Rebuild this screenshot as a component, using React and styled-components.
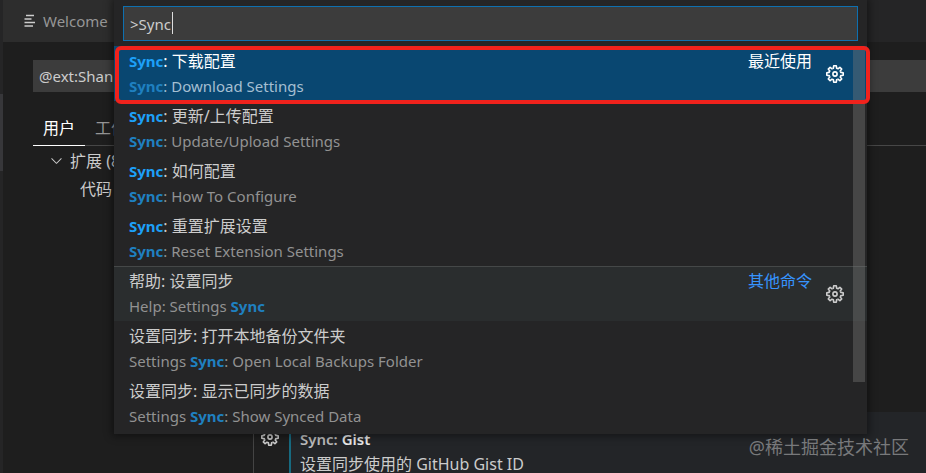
import styled, { createGlobalStyle } from 'styled-components'
import { VscChevronDown } from 'react-icons/vsc'

const colors = {
    editor: '#1e1e1e',
    widget: '#252526',
    tab: '#2d2d2d',
    field: '#3c3c3c',
    text: '#cccccc',
    muted: '#929292',
    focus: '#0e70b0',
    selected: '#094771',
    hover: '#2a2d2e',
    match: '#1da0f8',
    matchMuted: '#1f80c0',
    link: '#3794ff',
    marker: '#f0221c',
}

const GlobalStyle = createGlobalStyle`
    * {
        box-sizing: border-box;
    }
    body {
        margin: 0;
        overflow: hidden;
        background: ${colors.editor};
        color: ${colors.text};
        font-family: "Noto Sans", "Noto Sans CJK SC", sans-serif;
        font-size: 16px;
    }
    button, input {
        font: inherit;
        color: inherit;
    }
    ul {
        list-style: none;
        margin: 0;
        padding: 0;
    }
`

/**
 * Whole window: side edge and editor, with the palette over them.
 */
const Window = styled.div`
    position: relative;
    display: flex;
    height: 100vh;
    overflow: hidden;
`

const SideEdge = styled.div`
    flex: 0 0 3px;
    padding-top: 94px;
    background: ${colors.widget};
`

const SideThumb = styled.div`
    height: 77px;
    background: #37373a;
`

const Editor = styled.main`
    flex: 1;
    min-width: 0;
    display: flex;
    flex-direction: column;
`

const TabBar = styled.header`
    display: flex;
    height: 42px;
    background: ${colors.widget};
`

const Tab = styled.button`
    display: flex;
    align-items: center;
    gap: 6px;
    padding: 0 20px;
    border: 0;
    background: ${colors.tab};
    color: #969696;
    font-size: 15px;
`

const SearchInput = styled.input`
    flex: 0 0 32px;
    margin: 18px 0 0 30px;
    padding: 0 6px;
    border: 0;
    background: ${colors.field};
    font-size: 15px;
`

const Scopes = styled.nav`
    display: flex;
    height: 38px;
    margin: 16px 0 0 30px;
    border-bottom: 1px solid #474747;
`

const Scope = styled.button`
    height: 38px;
    padding: 0 10px;
    border: 0;
    border-bottom: 1px solid ${({ $active }) => ($active ? '#ffffff' : 'transparent')};
    background: none;
    color: ${({ $active }) => ($active ? '#ffffff' : '#969696')};
`

const SettingsBody = styled.div`
    flex: 1;
    display: flex;
    min-height: 0;
`

const Tree = styled.ul`
    flex: 0 0 251px;
    border-right: 1px solid #444444;
`

const TreeItem = styled.li`
    display: flex;
    align-items: center;
    gap: 5px;
    height: 28px;
    padding-left: ${({ $level }) => ($level === 1 ? '45px' : '77px')};
    white-space: nowrap;
`

const Settings = styled.div`
    flex: 1;
    display: flex;
    align-items: flex-end;
`

const SettingTools = styled.div`
    display: flex;
    justify-content: center;
    width: 31px;
    height: 46px;
`

const Setting = styled.section`
    flex: 1;
    height: 61px;
    margin-left: 4px;
    padding: 14px 0 0 9px;
    border-left: 2px solid #176a80;
    background: #232528;
    white-space: nowrap;
`

const SettingTitle = styled.h2`
    margin: 0;
    font-size: 15px;
    line-height: 26px;
    font-weight: 600;
    color: #bbbbbb;
    strong {
        color: #e7e7e7;
        font-weight: 600;
    }
`

const SettingText = styled.label`
    display: block;
    line-height: 24px;
`

const IconButton = styled.button`
    display: flex;
    padding: 0;
    border: 0;
    background: none;
    color: ${({ $bright }) => ($bright ? '#ffffff' : colors.text)};
`

/**
 * Command palette floating over the editor.
 */
const Palette = styled.div`
    position: absolute;
    top: 0;
    left: 114px;
    right: 59px;
    padding: 6px 0 3px;
    background: ${colors.widget};
    box-shadow: 0 0 8px 2px rgba(0, 0, 0, 0.45);
`

const QueryBox = styled.div`
    position: relative;
    display: flex;
    margin: 0 9px 5px;
`

const QueryInput = styled.input`
    flex: 1;
    min-width: 0;
    height: 35px;
    padding: 0 6px;
    border: 1px solid ${colors.focus};
    outline: 0;
    background: ${colors.field};
    font-size: 15px;
`

const Caret = styled.span`
    position: absolute;
    top: 6px;
    left: 49px;
    width: 1px;
    height: 22px;
    background: #dddddd;
`

const Results = styled.div`
    position: relative;
`

const Row = styled.li`
    display: flex;
    height: 55px;
    padding: 2px 22px 1px 0;
    background: ${({ $state }) => colors[$state] || 'transparent'};
    box-shadow: ${({ $first }) => ($first ? 'inset 0 1px #454848' : 'none')};
`

const Command = styled.button`
    flex: 1;
    min-width: 0;
    display: flex;
    flex-direction: column;
    padding: 0 0 0 15px;
    border: 0;
    background: none;
    text-align: left;
    white-space: nowrap;
`

const Label = styled.span`
    line-height: 26px;
    color: ${({ $selected }) => ($selected ? '#ffffff' : colors.text)};
    mark {
        background: none;
        color: ${colors.match};
        font-size: 15px;
        font-weight: 700;
    }
`

const Detail = styled.span`
    font-size: 15px;
    line-height: 24px;
    color: ${({ $selected }) => ($selected ? '#a5bfd2' : colors.muted)};
    mark {
        background: none;
        color: ${colors.matchMuted};
        font-weight: 700;
    }
`

const Group = styled.span`
    line-height: 26px;
    color: ${({ $selected }) => ($selected ? '#ffffff' : colors.link)};
`

const RowTools = styled.div`
    display: flex;
    align-items: center;
    margin-left: 13px;
`

const Thumb = styled.div`
    position: absolute;
    top: 3px;
    right: 2px;
    width: 12px;
    height: 333px;
    background: rgba(121, 121, 121, 0.4);
`

const Marker = styled.div`
    position: absolute;
    top: 0;
    left: 1px;
    right: -3px;
    height: 58px;
    border: 4px solid ${colors.marker};
    border-radius: 6px;
    pointer-events: none;
`

const Watermark = styled.div`
    position: absolute;
    right: 17px;
    bottom: 12px;
    font-size: 18px;
    line-height: 28px;
    color: #78797b;
`

const commands = [
    { label: 'Sync: 下载配置', detail: 'Sync: Download Settings', group: '最近使用', state: 'selected' },
    { label: 'Sync: 更新/上传配置', detail: 'Sync: Update/Upload Settings' },
    { label: 'Sync: 如何配置', detail: 'Sync: How To Configure' },
    { label: 'Sync: 重置扩展设置', detail: 'Sync: Reset Extension Settings' },
    { label: '帮助: 设置同步', detail: 'Help: Settings Sync', group: '其他命令', state: 'hover', first: true },
    { label: '设置同步: 打开本地备份文件夹', detail: 'Settings Sync: Open Local Backups Folder' },
    { label: '设置同步: 显示已同步的数据', detail: 'Settings Sync: Show Synced Data' },
]

/**
 * Marks the searched word in a text.
 * @param {string} text - The text to show.
 */
function Highlight({ text }) {
    return (
        <span>
            {text.split(/(Sync\b)/).map((part, index) => (
                part === 'Sync' ? <mark key={index}>{part}</mark> : part
            ))}
        </span>
    )
}

function LinesIcon() {
    return (
        <svg width="14" height="14" viewBox="0 0 14 14" stroke="#cccccc" strokeWidth="1.4" aria-hidden="true">
            <path d="M3 1.5H11M1.5 5H8.5M1.5 8.5H12M1.5 12H10" />
        </svg>
    )
}

// One tooth of the gear, turned eight times round the centre
function GearIcon() {
    const teeth = [0, 45, 90, 135, 180, 225, 270, 315]
    return (
        <svg width="20" height="20" viewBox="-10 -10 20 20" fill="none" stroke="currentColor" strokeWidth="1.6" strokeLinejoin="round" aria-hidden="true">
            {teeth.map((angle) => (
                <path key={angle} transform={`rotate(${angle})`} d="M-2.6 -5.4L-1.6 -5.8L-1.3 -8.2H1.3L1.6 -5.8L2.1 -5.6" />
            ))}
            <circle r="2.1" />
        </svg>
    )
}

function CommandRow({ label, detail, group, state, first }) {
    const selected = state === 'selected'
    return (
        <Row $state={state} $first={first}>
            <Command type="button">
                <Label $selected={selected}><Highlight text={label} /></Label>
                <Detail $selected={selected}><Highlight text={detail} /></Detail>
            </Command>
            {group && (
                <>
                    <Group $selected={selected}>{group}</Group>
                    <RowTools>
                        <IconButton type="button" aria-label={label} $bright={selected}><GearIcon /></IconButton>
                    </RowTools>
                </>
            )}
        </Row>
    )
}

function App() {
    return (
        <>
            <GlobalStyle />
            <Window>
                <SideEdge><SideThumb /></SideEdge>
                <Editor>
                    <TabBar>
                        <Tab type="button"><LinesIcon />Welcome</Tab>
                    </TabBar>
                    <SearchInput aria-label="Search" defaultValue="@ext:Shan" />
                    <Scopes>
                        <Scope type="button" $active>用户</Scope>
                        <Scope type="button">工作</Scope>
                    </Scopes>
                    <SettingsBody>
                        <Tree>
                            <TreeItem $level={1}><VscChevronDown size={17} />扩展 (8)</TreeItem>
                            <TreeItem $level={2}>代码</TreeItem>
                        </Tree>
                        <Settings>
                            <SettingTools>
                                <IconButton type="button" aria-label="Gist"><GearIcon /></IconButton>
                            </SettingTools>
                            <Setting>
                                <SettingTitle>Sync: <strong>Gist</strong></SettingTitle>
                                <SettingText>设置同步使用的 GitHub Gist ID</SettingText>
                            </Setting>
                        </Settings>
                    </SettingsBody>
                </Editor>
                <Palette>
                    <QueryBox>
                        <QueryInput aria-label="Command" defaultValue=">Sync" />
                        <Caret />
                    </QueryBox>
                    <Results>
                        <ul>
                            {commands.map((command) => (
                                <CommandRow key={command.detail} {...command} />
                            ))}
                        </ul>
                        <Thumb />
                        <Marker />
                    </Results>
                </Palette>
                <Watermark>@稀土掘金技术社区</Watermark>
            </Window>
        </>
    )
}

export default App
